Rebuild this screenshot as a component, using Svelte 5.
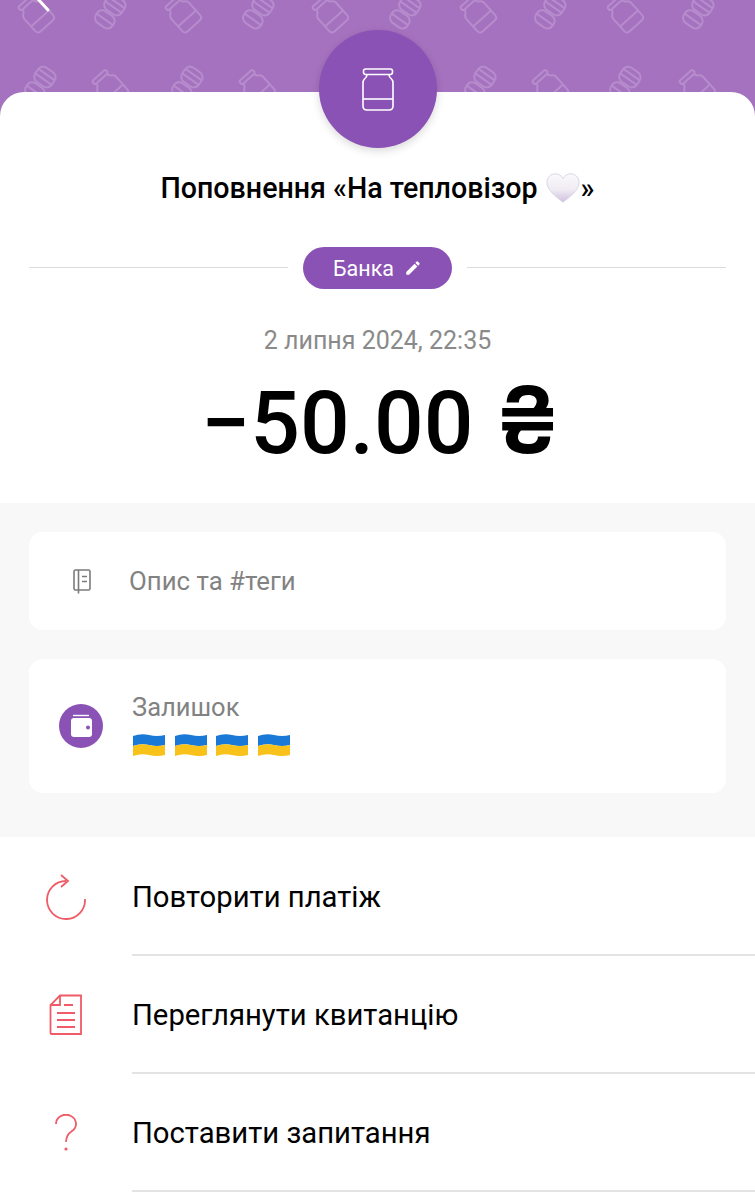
<script>
  const marks = [
    ['jar',36,14],['coins',110,12],['jar',183,14],['coins',258,12],['jar',330,14],['coins',405,12],['jar',478,14],['coins',550,12],['jar',625,14],['coins',698,12],
    ['coins',40,84],['jar',110,88],['coins',187,84],['jar',257,88],['coins',480,84],['jar',550,88],['coins',625,84],['jar',697,88]
  ];
  const flags = [0,1,2,3];
  const actions = ['Повторити платіж','Переглянути квитанцію','Поставити запитання'];
</script>

<div class="page">
  <header class="top">
    <svg class="pattern" width="755" height="116" viewBox="0 0 755 116" fill="none" stroke="#b68ccc" stroke-width="2">
      {#each marks as [kind,x,y]}
        {#if kind==='jar'}
          <g transform="translate({x} {y}) rotate(-42)">
            <rect x="-9" y="-17" width="18" height="4.500" rx="2"/>
            <path d="M-7 -12.500 Q-7 -10 -10 -8 Q-12 -6.500 -12 -4 V12 Q-12 16 -8 16 H8 Q12 16 12 12 V-4 Q12 -6.500 10 -8 Q7 -10 7 -12.500"/>
            <path d="M-12 6 H12"/>
          </g>
        {:else}
          <g transform="translate({x} {y}) rotate(35)">
            <rect x="-10" y="-17" width="20" height="17" rx="6"/>
            <path d="M-10 -11.500 H10 M-10 -6 H10"/>
            <rect x="-10" y="2" width="20" height="14" rx="6"/>
            <path d="M-10 9 H10"/>
          </g>
        {/if}
      {/each}
      <path class="back" d="M37 -2 L48 10"/>
    </svg>
  </header>

  <div class="hero-wrap">
    <div class="avatar">
      <svg width="32" height="43" viewBox="0 0 32 43" fill="none" stroke="#fff" stroke-width="1.600">
        <rect x="1.500" y="1" width="29" height="5.500" rx="2.200"/>
        <path d="M5 6.500 Q5 9 2.500 11 Q1 12.500 1 15 V38 Q1 42 5 42 H27 Q31 42 31 38 V15 Q31 12.500 29.500 11 Q27 9 27 6.500"/>
        <path d="M1 31 H31"/>
      </svg>
    </div>
    <section class="hero">
      <h1 class="title"><span>Поповнення «На тепловізор</span><svg class="heart" width="34" height="32" viewBox="0 0 36 32">
        <defs><linearGradient id="hg" x1="0" y1="0" x2="0" y2="1"><stop offset="0" stop-color="#faf9fb"/><stop offset="0.55" stop-color="#f0ecf3"/><stop offset="1" stop-color="#cfc0de"/></linearGradient></defs>
        <path d="M18 31 C10 25 1 18 1 10 C1 4.500 5 1 10 1 C13.500 1 16.500 3 18 6 C19.500 3 22.500 1 26 1 C31 1 35 4.500 35 10 C35 18 26 25 18 31Z" fill="url(#hg)" stroke="#d9d3e0" stroke-width="1"/>
      </svg><span>»</span></h1>

      <div class="tag-row">
        <span class="line"></span>
        <span class="pill">Банка
          <svg width="18" height="18" viewBox="0 0 24 24" fill="#fff"><path d="M3 17.250V21h3.750L17.810 9.940l-3.750-3.750L3 17.250zM20.710 7.040a1 1 0 0 0 0-1.410l-2.340-2.340a1 1 0 0 0-1.410 0l-1.830 1.830 3.750 3.750 1.830-1.830z"/></svg>
        </span>
        <span class="line"></span>
      </div>

      <p class="date">2 липня 2024, 22:35</p>
      <p class="amount">−50.00 <span class="currency">₴</span></p>
    </section>
  </div>

  <section class="gray">
    <div class="card note">
      <span class="note-icon">
        <svg width="18" height="25" viewBox="0 0 18 25" fill="none" stroke="#7b7b7b" stroke-width="1.600">
          <path d="M5 21H2.500Q1 21 1 19.500V2.500Q1 1 2.500 1H15.500Q17 1 17 2.500V19.500Q17 21 15.500 21H5"/>
          <path d="M5.500 1V24.500M9 7.500H14M9 12.500H14"/>
        </svg>
      </span>
      <span class="note-text">Опис та #теги</span>
    </div>

    <div class="card balance">
      <span class="wallet">
        <svg width="23" height="24" viewBox="0 0 23 24">
          <path d="M3 1.500H19" stroke="#fff" stroke-width="1.400" fill="none"/>
          <rect x="1" y="4" width="21" height="19" rx="3" fill="#fff"/>
          <circle cx="18" cy="13.500" r="2" fill="#8a52b5"/>
        </svg>
      </span>
      <div class="balance-text">
        <span class="balance-label">Залишок</span>
        <span class="flags">
          {#each flags as f}
            <svg width="34" height="24" viewBox="0 0 34 24">
              <path d="M1 3 Q9 0 17 2 T33 2 V12 Q25 14 17 12 T1 13Z" fill="#1a78d6"/>
              <path d="M1 13 Q9 10 17 12 T33 12 V22 Q25 24 17 22 T1 23Z" fill="#f9c21a"/>
            </svg>
          {/each}
        </span>
      </div>
    </div>
  </section>

  <nav class="actions">
    {#each actions as label, i}
      <div class="row">
        <span class="row-icon">
          {#if i===0}
            <svg width="44" height="46" viewBox="0 0 44 46" fill="none" stroke="#ef5b66" stroke-width="1.800">
              <path d="M41 25A19 19 0 1 1 22 7"/>
              <path d="M17 1L24 7L17 13"/>
            </svg>
          {:else if i===1}
            <svg width="34" height="42" viewBox="0 0 34 42" fill="none" stroke="#ef5b66" stroke-width="1.800">
              <path d="M11 1.500H32V40H2.500Q1.500 40 1.500 39V11Z"/>
              <path d="M11 1.500V11H1.500M15 11H24M8 19H26M8 26H26M8 33H26"/>
            </svg>
          {:else}
            <svg width="24" height="38" viewBox="0 0 24 38" fill="none" stroke="#ef5b66" stroke-width="1.800">
              <path d="M2 10A10 9 0 1 1 18 17Q12 21 12 28"/>
              <circle cx="12" cy="35" r="1.600" fill="#ef5b66" stroke="none"/>
            </svg>
          {/if}
        </span>
        <span class="row-label">{label}</span>
      </div>
    {/each}
  </nav>
</div>

<style>
  :global(body){margin:0;background:#fff;}
  .page{width:755px;height:1200px;overflow:hidden;font-family:Roboto,"Liberation Sans",sans-serif;color:#000;background:#fff;}
  .top{height:116px;margin-bottom:-24px;background:#a572bf;position:relative;}
  .pattern{position:absolute;inset:0;display:block;}
  .back{stroke:#fff;stroke-width:3;stroke-linecap:round;}
  .hero-wrap{position:relative;}
  .avatar{position:absolute;left:319px;top:-62px;width:118px;height:118px;border-radius:50%;background:#8a52b5;display:flex;align-items:center;justify-content:center;box-shadow:0 3px 8px rgba(0,0,0,.15);z-index:2;}
  .hero{background:#fff;border-radius:24px 24px 0 0;height:411px;box-sizing:border-box;padding-top:76px;position:relative;}
  .title{margin:0;font-size:28.600px;font-weight:500;line-height:40px;display:flex;justify-content:center;align-items:center;white-space:pre;}
  .heart{display:block;margin:0 1px 0 8px;}
  .tag-row{display:flex;align-items:center;margin:39px 29px 0;gap:15px;}
  .line{flex:1;height:1px;background:#dcdcdc;margin-bottom:2px;}
  .pill{width:149px;height:42px;border-radius:21px;background:#8a52b5;color:#fff;font-size:21.500px;display:flex;align-items:center;justify-content:center;gap:10px;}
  .date{margin:32px 0 0;text-align:center;color:#8a8a8a;font-size:25px;line-height:40px;}
  .amount{margin:9px 0 0;padding-left:6px;text-align:center;font-size:87.500px;font-weight:500;line-height:100px;white-space:pre;}
  .currency{font-family:Inter,Roboto,sans-serif;font-size:92px;font-weight:600;}
  .gray{background:#f8f8f8;height:334px;box-sizing:border-box;padding:29px 29px 0;display:flex;flex-direction:column;gap:29px;}
  .card{background:#fff;border-radius:14px;display:flex;align-items:center;}
  .note{height:98px;padding-left:44px;gap:38px;}
  .note-icon{display:flex;}
  .note-text{font-size:25.800px;color:#828282;}
  .balance{height:134px;padding-left:30px;gap:29px;}
  .wallet{width:44px;height:44px;border-radius:50%;background:#8a52b5;display:flex;align-items:center;justify-content:center;}
  .balance-text{display:flex;flex-direction:column;padding-bottom:6px;}
  .balance-label{font-size:25.500px;color:#828282;line-height:34px;}
  .flags{display:flex;gap:7.500px;margin-top:9px;}
  .actions{display:flex;flex-direction:column;}
  .row{height:118px;padding-top:1px;display:flex;align-items:center;position:relative;box-sizing:border-box;}
  .row::after{content:"";position:absolute;left:132px;right:0;bottom:-1px;height:2px;background:#e3e3e3;}
  .row-icon{width:132px;display:flex;justify-content:center;box-sizing:border-box;}
  .row-label{font-size:29.250px;}
</style>
